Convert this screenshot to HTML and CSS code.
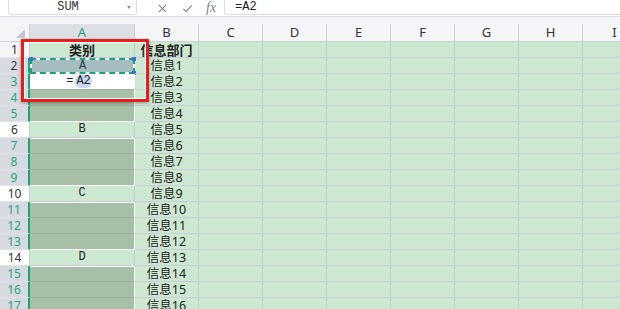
FILE: index.html
```html
<!DOCTYPE html>
<html lang="zh-CN">
<head>
    <meta charset="UTF-8">
    <title>WPS 表格</title>
    <link rel="stylesheet" href="styles.css">
</head>
<body>
    <!-- Formula bar -->
    <div class="toolbar">
        <div class="name-box">
            <span class="name-text">SUM</span>
            <span class="name-arrow"></span>
        </div>
        <div class="fx-tools">
            <svg class="tool-icon" viewBox="0 0 12 12"><path d="M2 2l8 8M10 2l-8 8"/></svg>
            <svg class="tool-icon" viewBox="0 0 12 12"><path d="M1.5 6.5l3 3 6-7"/></svg>
            <span class="fx">fx</span>
        </div>
        <div class="formula-box">=A2</div>
    </div>

    <div class="sheet">
        <!-- Column headers -->
        <div class="head-row">
            <div class="corner"><span class="corner-tri"></span></div>
            <div class="ch ch-active">A</div>
            <div class="ch">B</div>
            <div class="ch">C</div>
            <div class="ch">D</div>
            <div class="ch">E</div>
            <div class="ch">F</div>
            <div class="ch">G</div>
            <div class="ch">H</div>
            <div class="ch">I</div>
        </div>

        <div class="row">
            <div class="rh rh-top">1</div>
            <div class="c a bold">类别</div>
            <div class="c b bold">信息部门</div>
            <div class="rest"></div>
        </div>
        <div class="row">
            <div class="rh rh-sel rh-dark">2</div>
            <div class="c a ref">
                A
                <span class="knob k-tl"></span>
                <span class="knob k-tr"></span>
                <span class="knob k-br"></span>
            </div>
            <div class="c b">信息1</div>
            <div class="rest"></div>
        </div>
        <div class="row">
            <div class="rh rh-sel">3</div>
            <div class="c a sel first edit">=<span class="ref-pill">A2</span></div>
            <div class="c b">信息2</div>
            <div class="rest"></div>
        </div>
        <div class="row">
            <div class="rh rh-sel">4</div>
            <div class="c a sel"></div>
            <div class="c b">信息3</div>
            <div class="rest"></div>
        </div>
        <div class="row">
            <div class="rh rh-sel">5</div>
            <div class="c a sel last"></div>
            <div class="c b">信息4</div>
            <div class="rest"></div>
        </div>
        <div class="row">
            <div class="rh">6</div>
            <div class="c a">B</div>
            <div class="c b">信息5</div>
            <div class="rest"></div>
        </div>
        <div class="row">
            <div class="rh rh-sel">7</div>
            <div class="c a sel first"></div>
            <div class="c b">信息6</div>
            <div class="rest"></div>
        </div>
        <div class="row">
            <div class="rh rh-sel">8</div>
            <div class="c a sel"></div>
            <div class="c b">信息7</div>
            <div class="rest"></div>
        </div>
        <div class="row">
            <div class="rh rh-sel">9</div>
            <div class="c a sel last"></div>
            <div class="c b">信息8</div>
            <div class="rest"></div>
        </div>
        <div class="row">
            <div class="rh">10</div>
            <div class="c a">C</div>
            <div class="c b">信息9</div>
            <div class="rest"></div>
        </div>
        <div class="row">
            <div class="rh rh-sel">11</div>
            <div class="c a sel first"></div>
            <div class="c b">信息10</div>
            <div class="rest"></div>
        </div>
        <div class="row">
            <div class="rh rh-sel">12</div>
            <div class="c a sel"></div>
            <div class="c b">信息11</div>
            <div class="rest"></div>
        </div>
        <div class="row">
            <div class="rh rh-sel">13</div>
            <div class="c a sel last"></div>
            <div class="c b">信息12</div>
            <div class="rest"></div>
        </div>
        <div class="row">
            <div class="rh">14</div>
            <div class="c a">D</div>
            <div class="c b">信息13</div>
            <div class="rest"></div>
        </div>
        <div class="row">
            <div class="rh rh-sel">15</div>
            <div class="c a sel first"></div>
            <div class="c b">信息14</div>
            <div class="rest"></div>
        </div>
        <div class="row">
            <div class="rh rh-sel">16</div>
            <div class="c a sel"></div>
            <div class="c b">信息15</div>
            <div class="rest"></div>
        </div>
        <div class="row">
            <div class="rh rh-sel">17</div>
            <div class="c a sel last"></div>
            <div class="c b">信息16</div>
            <div class="rest"></div>
        </div>

        <!-- Red highlight box -->
        <div class="highlight"></div>
    </div>
</body>
</html>
```

FILE: styles.css
```css
* {
    margin: 0;
    padding: 0;
    box-sizing: border-box;
}

body {
    width: 620px;
    height: 309px;
    overflow: hidden;
    background: #fff;
    font-family: "Noto Sans", "Noto Sans CJK SC", sans-serif;
    color: #222;
}

/* Formula bar */
.toolbar {
    height: 17px;
    display: flex;
    align-items: flex-end;
    border-bottom: 1px solid #d9dce2;
    background: #fff;
}

.name-box {
    position: relative;
    margin-left: 8px;
    width: 129px;
    height: 20px;
    margin-bottom: 1px;
    border: 1px solid #dadde3;
    border-radius: 3px;
    display: flex;
    align-items: center;
    padding-right: 10px;
}

.name-text {
    flex: 1;
    text-align: center;
    font-family: "Liberation Mono", monospace;
    font-size: 12px;
    color: #333;
    padding-top: 4px;
}

.name-arrow {
    width: 0;
    height: 0;
    border-left: 2px solid transparent;
    border-right: 2px solid transparent;
    border-top: 3px solid #8a8f98;
    margin-top: 4px;
    margin-right: -5px;
}

.fx-tools {
    display: flex;
    align-items: center;
    height: 16px;
    margin-left: 20px;
}

.tool-icon {
    width: 11px;
    height: 11px;
    fill: none;
    stroke: #7d828b;
    stroke-width: 1.2;
    margin-right: 14px;
}

.fx {
    font-family: "Liberation Serif", serif;
    font-style: italic;
    font-size: 14px;
    color: #7d828b;
    line-height: 14px;
    margin-left: -1px;
}

.formula-box {
    flex: 1;
    margin-left: 8px;
    height: 20px;
    margin-bottom: 1px;
    border: 1px solid #dadde3;
    border-right: none;
    border-radius: 3px 0 0 3px;
    padding: 5px 0 0 10px;
    font-family: "Liberation Mono", monospace;
    font-size: 12px;
    line-height: 12px;
    color: #222;
}

/* Sheet */
.sheet {
    position: relative;
    background: #f4f5f7;
    padding-top: 7px;
}

.head-row,
.row {
    display: grid;
    grid-template-columns: 30px 105px 64px 1fr;
}

.head-row {
    grid-template-columns: 30px 105px repeat(8, 64px);
    height: 18px;
    border-bottom: 1px solid #cbd0d8;
}

.corner {
    position: relative;
    border-right: 1px solid #cbd0d8;
}

.corner-tri {
    position: absolute;
    right: 4px;
    bottom: 3px;
    width: 0;
    height: 0;
    border-left: 9px solid transparent;
    border-bottom: 9px solid #c3c7cf;
}

.ch {
    border-right: 1px solid #cbd0d8;
    text-align: center;
    font-size: 13px;
    line-height: 17px;
    color: #333;
}

.ch-active {
    background: #dcdfe4;
    color: #1f9f77;
}

.row {
    height: 16px;
    background: #cde8d0;
}

.rh {
    background: #fff;
    border-right: 1px solid #cbd0d8;
    border-bottom: 1px solid #dfe2e7;
    text-align: center;
    font-size: 12px;
    line-height: 15px;
    color: #333;
    overflow: hidden;
}

.rh-top {
    background: #f4f5f7;
}

.rh-sel {
    background: #d7dae0;
    color: #22a57c;
    border-right: 2px solid #1fa477;
}

.rh-dark {
    color: #2d3a4b;
}

.c {
    position: relative;
    border-right: 1px solid #c5cbd9;
    border-bottom: 1px solid #c5cbd9;
    text-align: center;
    font-size: 12.5px;
    line-height: 15px;
    white-space: nowrap;
    font-family: "Noto Sans", "Noto Sans CJK SC", sans-serif;
}

.c.a {
    font-family: "Liberation Mono", "Noto Sans CJK SC", monospace;
    font-size: 12px;
}

.c.bold {
    font-family: "Noto Sans CJK SC", sans-serif;
    font-weight: 700;
    font-size: 13px;
}

.rest {
    border-bottom: 1px solid #c5cbd9;
    background: repeating-linear-gradient(to right, transparent 0 63px, #c5cbd9 63px 64px);
}

/* Selected blank cells */
.c.sel {
    background: #a9c0a8;
    border-right: 1px solid #fff;
    border-bottom-color: #9bb09b;
}

.c.sel.first {
    box-shadow: inset 0 1px #fff;
}

.c.sel.last {
    border-bottom-color: #fff;
}

.c.edit {
    background: #fff;
    color: #222;
    padding-right: 6px;
}

.ref-pill {
    display: inline-block;
    margin-left: 2px;
    padding: 0 1px;
    background: #c8d7f2;
    border-radius: 6px;
    line-height: 13px;
}

/* Referenced cell with marching ants */
.c.ref {
    border: 2px dashed #1fa27a;
    background: linear-gradient(#a6bdbf, #a6bdbf) padding-box, linear-gradient(#fff, #fff) border-box;
    line-height: 12px;
    color: #2d3a4b;
}

.knob {
    position: absolute;
    width: 4px;
    height: 4px;
    background: #3a6fe0;
}

.k-tl { left: -3px; top: -3px; }
.k-tr { right: -3px; top: -3px; }
.k-br { right: -3px; bottom: -3px; }

/* Red annotation box */
.highlight {
    position: absolute;
    left: 21px;
    top: 22px;
    width: 128px;
    height: 63px;
    border: 3px solid #e51f1b;
    box-shadow: inset 0 0 0 1px #fff, 0 1px 3px rgba(0,0,0,0.35);
}
```
